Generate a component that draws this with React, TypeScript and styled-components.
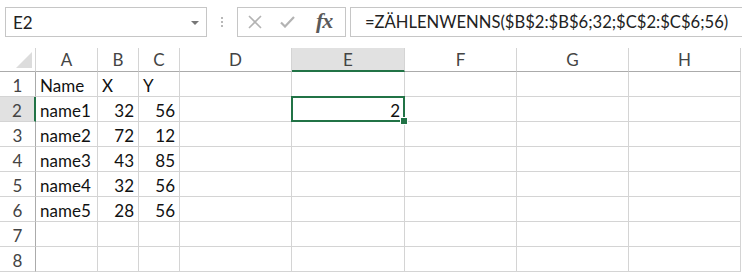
import React from 'react';
import styled, {createGlobalStyle} from 'styled-components';

const GlobalStyle = createGlobalStyle`
    html, body {
        margin: 0;
        padding: 0;
        background: #ffffff;
        font-family: Lato, "Liberation Sans", sans-serif;
        overflow: hidden;
    }
    * {
        box-sizing: border-box;
    }
`

const GREEN = '#217346';
const GRID = '#d4d4d4';

const Page = styled.div`
    width: 742px;
    height: 274px;
    display: flex;
    flex-direction: column;
`

const FormulaBar = styled.div`
    display: flex;
    align-items: center;
    height: 30px;
    margin-top: 7px;
    padding-left: 5px;
`

const NameBox = styled.div`
    width: 202px;
    height: 30px;
    border: 1px solid #c6c6c6;
    display: flex;
    align-items: center;
    justify-content: space-between;
    padding: 0 7px 0 7px;
    font-size: 17px;
    color: #222;
`

const DropArrow = styled.span`
    width: 0;
    height: 0;
    border-left: 4px solid transparent;
    border-right: 4px solid transparent;
    border-top: 4px solid #777;
    margin-top: 1px;
`

const Grip = styled.div`
    width: 30px;
    display: flex;
    flex-direction: column;
    align-items: center;
    gap: 2px;

    span {
        width: 2px;
        height: 2px;
        background: #b8b8b8;
    }
`

const IconBox = styled.div`
    width: 109px;
    height: 30px;
    border: 1px solid #c6c6c6;
    display: flex;
    align-items: center;
    padding-left: 10px;
    gap: 18px;
`

const Fx = styled.span`
    font-family: "Liberation Serif", serif;
    font-style: italic;
    font-weight: bold;
    font-size: 22px;
    color: #5a5a5a;
    letter-spacing: -1px;
    margin-left: 3px;
    margin-top: -2px;
`

const FormulaInput = styled.div`
    flex: 1;
    height: 30px;
    margin-left: 4px;
    border: 1px solid #c6c6c6;
    border-right: none;
    display: flex;
    align-items: center;
    padding-left: 14px;
    font-size: 16.6px;
    color: #222;
    white-space: nowrap;
`

const Sheet = styled.div`
    margin-top: 11px;
    display: grid;
    grid-template-columns: 36px 62px 41px 41px 112px 113px 112px 112px 112px;
    grid-template-rows: 24px repeat(8, 25px);
    font-size: 17px;
`

const Corner = styled.div`
    border-right: 1px solid ${GRID};
    border-bottom: 1px solid #ababab;
    display: flex;
    align-items: flex-end;
    justify-content: flex-end;
    padding: 0 3px 3px 0;
`

const ColHead = styled.div<{ $active?: boolean }>`
    display: flex;
    align-items: center;
    justify-content: center;
    color: #444;
    background: ${p => (p.$active ? '#e1e1e1' : '#ffffff')};
    border-right: 1px solid ${GRID};
    border-bottom: ${p => (p.$active ? `2px solid ${GREEN}` : '1px solid #ababab')};
    padding-top: ${p => (p.$active ? '1px' : '0')};
`

const RowHead = styled.div<{ $active?: boolean }>`
    display: flex;
    align-items: center;
    justify-content: center;
    color: #444;
    padding-top: 2px;
    background: ${p => (p.$active ? '#e1e1e1' : '#ffffff')};
    border-bottom: 1px solid ${GRID};
    border-right: ${p => (p.$active ? `2px solid ${GREEN}` : '1px solid #ababab')};
`

const Cell = styled.div<{ $num?: boolean; $selected?: boolean }>`
    position: relative;
    display: flex;
    align-items: center;
    justify-content: ${p => (p.$num ? 'flex-end' : 'flex-start')};
    padding: 2px 4px 0 4px;
    color: #111;
    border-right: 1px solid ${GRID};
    border-bottom: 1px solid ${GRID};
    white-space: nowrap;

    ${p => p.$selected && `
        &::after {
            content: '';
            position: absolute;
            left: -1px;
            top: -1px;
            right: -1px;
            bottom: -1px;
            border: 2px solid ${GREEN};
        }
        &::before {
            content: '';
            position: absolute;
            right: -4px;
            bottom: -4px;
            width: 6px;
            height: 6px;
            background: ${GREEN};
            border: 1px solid #fff;
            z-index: 2;
        }
    `}
`

const columns = ['A', 'B', 'C', 'D', 'E', 'F', 'G', 'H'];

const data: (string | number)[][] = [
    ['Name', 'X', 'Y'],
    ['name1', 32, 56],
    ['name2', 72, 12],
    ['name3', 43, 85],
    ['name4', 32, 56],
    ['name5', 28, 56],
    [],
    [],
];

const App = () => (
    <Page>
        <GlobalStyle/>
        <FormulaBar>
            <NameBox>
                <span>E2</span>
                <DropArrow/>
            </NameBox>
            <Grip><span/><span/><span/></Grip>
            <IconBox>
                <svg width="14" height="14" viewBox="0 0 14 14">
                    <path d="M1 1 L13 13 M13 1 L1 13" stroke="#b3b3b3" strokeWidth="1.6" fill="none"/>
                </svg>
                <svg width="15" height="12" viewBox="0 0 15 12">
                    <path d="M1 6.5 L5 10.5 L14 1" stroke="#b3b3b3" strokeWidth="2.2" fill="none"/>
                </svg>
                <Fx>fx</Fx>
            </IconBox>
            <FormulaInput>=ZÄHLENWENNS($B$2:$B$6;32;$C$2:$C$6;56)</FormulaInput>
        </FormulaBar>
        <Sheet>
            <Corner>
                <svg width="16" height="16" viewBox="0 0 16 16">
                    <polygon points="16,0 16,16 0,16" fill="#dcdcdc"/>
                </svg>
            </Corner>
            {columns.map(c => (
                <ColHead key={c} $active={c === 'E'}>{c}</ColHead>
            ))}
            {data.map((row, r) => (
                <React.Fragment key={r}>
                    <RowHead $active={r === 1}>{r + 1}</RowHead>
                    {columns.map((c, ci) => {
                        const v = row[ci];
                        const selected = c === 'E' && r === 1;
                        return (
                            <Cell key={c} $num={typeof v === 'number' || selected} $selected={selected}>
                                {selected ? 2 : v}
                            </Cell>
                        );
                    })}
                </React.Fragment>
            ))}
        </Sheet>
    </Page>
);

export default App;
